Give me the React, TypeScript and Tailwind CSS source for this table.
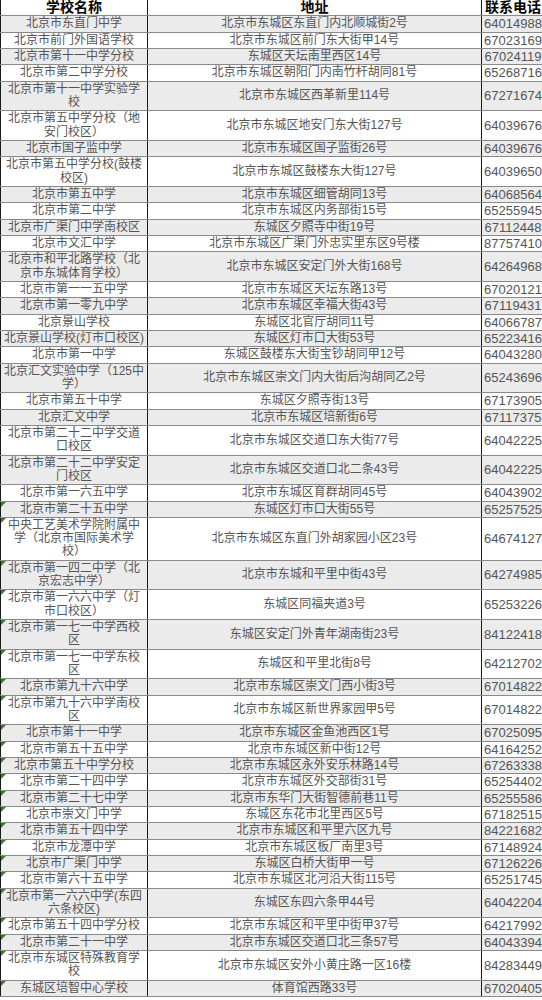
const font = { fontFamily: '"Liberation Sans", "Noto Sans CJK SC", sans-serif' };

// [学校名称, 地址, 联系电话]；名称中的 \n 对应原表格里的换行位置
const schools: [string, string, string][] = [
  ["北京市东直门中学", "北京市东城区东直门内北顺城街2号", "64014988"],
  ["北京市前门外国语学校", "北京市东城区前门东大街甲14号", "67023169"],
  ["北京市第十一中学分校", "东城区天坛南里西区14号", "67024119"],
  ["北京市第二中学分校", "北京市东城区朝阳门内南竹杆胡同81号", "65268716"],
  ["北京市第十一中学实验学\n校", "北京市东城区西革新里114号", "67271674"],
  ["北京市第五中学分校（地\n安门校区）", "北京市东城区地安门东大街127号", "64039676"],
  ["北京市国子监中学", "北京市东城区国子监街26号", "64039676"],
  ["北京市第五中学分校(鼓楼\n校区)", "北京市东城区鼓楼东大街127号", "64039650"],
  ["北京市第五中学", "北京市东城区细管胡同13号", "64068564"],
  ["北京市第二中学", "北京市东城区内务部街15号", "65255945"],
  ["北京市广渠门中学南校区", "东城区夕照寺中街19号", "67112448"],
  ["北京市文汇中学", "北京市东城区广渠门外忠实里东区9号楼", "87757410"],
  ["北京市和平北路学校（北\n京市东城体育学校）", "北京市东城区安定门外大街168号", "64264968"],
  ["北京市第一一五中学", "北京市东城区天坛东路13号", "67020121"],
  ["北京市第一零九中学", "北京市东城区幸福大街43号", "67119431"],
  ["北京景山学校", "东城区北官厅胡同11号", "64066787"],
  ["北京景山学校(灯市口校区)", "东城区灯市口大街53号", "65223416"],
  ["北京市第一中学", "东城区鼓楼东大街宝钞胡同甲12号", "64043280"],
  ["北京汇文实验中学（125中\n学）", "北京市东城区崇文门内大街后沟胡同乙2号", "65243696"],
  ["北京市第五十中学", "东城区夕照寺街13号", "67173905"],
  ["北京汇文中学", "北京市东城区培新街6号", "67117375"],
  ["北京市第二十二中学交道\n口校区", "北京市东城区交道口东大街77号", "64042225"],
  ["北京市第二十二中学安定\n门校区", "北京市东城区交道口北二条43号", "64042225"],
  ["北京市第一六五中学", "北京市东城区育群胡同45号", "64043902"],
  ["北京市第二十五中学", "东城区灯市口大街55号", "65257525"],
  ["中央工艺美术学院附属中\n学（北京市国际美术学\n校）", "北京市东城区东直门外胡家园小区23号", "64674127"],
  ["北京市第一四二中学（北\n京宏志中学）", "北京市东城和平里中街43号", "64274985"],
  ["北京市第一六六中学（灯\n市口校区）", "东城区同福夹道3号", "65253226"],
  ["北京市第一七一中学西校\n区", "东城区安定门外青年湖南街23号", "84122418"],
  ["北京市第一七一中学东校\n区", "东城区和平里北街8号", "64212702"],
  ["北京市第九十六中学", "北京市东城区崇文门西小街3号", "67014822"],
  ["北京市第九十六中学南校\n区", "北京市东城区新世界家园甲5号", "67014822"],
  ["北京市第十一中学", "北京市东城区金鱼池西区1号", "67025095"],
  ["北京市第五十五中学", "北京市东城区新中街12号", "64164252"],
  ["北京市第五十中学分校", "北京市东城区永外安乐林路14号", "67263338"],
  ["北京市第二十四中学", "北京市东城区外交部街31号", "65254402"],
  ["北京市第二十七中学", "北京市东华门大街智德前巷11号", "65255586"],
  ["北京市崇文门中学", "东城区东花市北里西区5号", "67182515"],
  ["北京市第五十四中学", "北京市东城区和平里六区九号", "84221682"],
  ["北京市龙潭中学", "北京市东城区板厂南里3号", "67148924"],
  ["北京市广渠门中学", "东城区白桥大街甲一号", "67126226"],
  ["北京市第六十五中学", "北京市东城区北河沿大街115号", "65251745"],
  ["北京市第一六六中学(东四\n六条校区)", "东城区东四六条甲44号", "64042204"],
  ["北京市第五十四中学分校", "北京市东城区和平里中街甲37号", "64217992"],
  ["北京市第二十一中学", "北京市东城区交道口北三条57号", "64043394"],
  ["北京市东城区特殊教育学\n校", "北京市东城区安外小黄庄路一区16楼", "84283449"],
  ["东城区培智中心学校", "体育馆西路33号", "67020405"],
];

// Excel 的“文本格式数字”绿色小三角，从第 25 行起
const FLAG_FROM = 24;

function Flag() {
  return (
    <svg className="absolute left-0 top-0" width="5" height="5" viewBox="0 0 5 5" aria-hidden="true">
      <polygon points="0,0 5,0 0,5" fill="#3b7f2a" />
    </svg>
  );
}

export default function App() {
  return (
    <div className="w-full overflow-hidden bg-white" style={font}>
      <div className="w-[544px]">
        {/* 表头 */}
        <div className="grid grid-cols-[148px_334px_62px] border-b border-[#8a8a8a] bg-white text-[14px] font-bold text-black leading-[13.33px]">
          <div className="flex items-center justify-center border-x border-[#1a1a1a] py-[1px]">学校名称</div>
          <div className="flex items-center justify-center border-r border-[#1a1a1a] py-[1px]">地址</div>
          <div className="flex items-center justify-center py-[1px]">联系电话</div>
        </div>

        {schools.map(([name, addr, tel], i) => (
          <div
            key={i}
            className={`grid grid-cols-[148px_334px_62px] border-b border-[#8a8a8a] text-[#555] leading-[13.33px] ${
              i % 2 === 0 ? "bg-[#ebebeb]" : "bg-white"
            }`}
          >
            <div className="relative flex items-center justify-center border-x border-[#1a1a1a] px-[2px] py-[1px] text-center text-[12px]">
              {i >= FLAG_FROM && <Flag />}
              <span className="whitespace-pre-line">{name}</span>
            </div>
            <div className="flex items-center justify-center border-r border-[#1a1a1a] py-[1px] text-center text-[12px]">
              {addr}
            </div>
            <div className="flex items-center justify-center py-[1px] text-[13px]">{tel}</div>
          </div>
        ))}
      </div>
    </div>
  );
}
